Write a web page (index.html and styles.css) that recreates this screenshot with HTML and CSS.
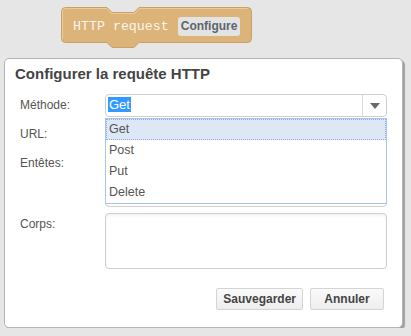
FILE: index.html
```html
<!DOCTYPE html>
<html lang="fr">
<head>
    <meta charset="UTF-8">
    <title>Configurer la requête HTTP</title>
    <link rel="stylesheet" href="styles.css">
</head>
<body>
    <div class="workspace">
        <div class="block">
            <svg class="block-shape" width="194" height="44" viewBox="0 0 194 44">
                <path d="M1.5,5.5 Q1.5,1.5 5.5,1.5 H47 L52,6.5 H74 L79,1.5 H187.5 Q191.5,1.5 191.5,5.5 V32.5 Q191.5,36.5 187.5,36.5 H79 L74,41.5 H52 L47,36.5 H5.5 Q1.5,36.5 1.5,32.5 Z"
                      fill="#dcb47a" stroke="#c8a068" stroke-width="1"/>
                <path d="M2.5,33 V5.5 Q2.5,2.5 5.5,2.5 H46.5 L51.5,7.5 H74.5 L79.5,2.5 H187.5" fill="none" stroke="#e8cc9c" stroke-width="1"/>
            </svg>
            <div class="block-content">
                <span class="block-label">HTTP request</span>
                <span class="block-button">Configure</span>
            </div>
        </div>
    </div>

    <div class="dialog">
        <h2 class="dialog-title">Configurer la requête HTTP</h2>
        <div class="form">
            <label class="form-label">Méthode:</label>
            <div class="select-wrap">
                <div class="select">
                    <span class="select-value"><span class="selected-text">Get</span></span>
                    <span class="select-arrow"></span>
                </div>
                <ul class="select-list">
                    <li class="option option-active">Get</li>
                    <li class="option">Post</li>
                    <li class="option">Put</li>
                    <li class="option">Delete</li>
                </ul>
            </div>

            <label class="form-label">URL:</label>
            <div class="input"></div>

            <label class="form-label">Entêtes:</label>
            <div class="textarea textarea-headers"></div>

            <label class="form-label">Corps:</label>
            <div class="textarea"></div>
        </div>
        <div class="actions">
            <button class="btn btn-save">Sauvegarder</button>
            <button class="btn btn-cancel">Annuler</button>
        </div>
    </div>
</body>
</html>
```

FILE: styles.css
```css
body {
    margin: 0;
    background-color: #e6e6e6;
    font-family: "Liberation Sans", Arial, sans-serif;
}

.workspace {
    height: 58px;
    padding: 6px 0 0 60px;
    box-sizing: border-box;
}

.block {
    position: relative;
    width: 194px;
    height: 44px;
}

.block-shape {
    position: absolute;
    left: 0;
    top: 0;
}

.block-content {
    position: relative;
    display: flex;
    align-items: center;
    gap: 9px;
    padding: 11px 0 0 13px;
}

.block-label {
    font-family: "Liberation Mono", monospace;
    font-size: 13.3px;
    color: #fbf5ea;
}

.block-button {
    font-weight: bold;
    font-size: 12px;
    color: #5b6670;
    background-color: #e3e3e1;
    border-radius: 3px;
    padding: 3px 3px 3px 3px;
    line-height: 13px;
}

.dialog {
    margin-left: 4px;
    width: 399px;
    height: 270px;
    box-sizing: border-box;
    background: white;
    border: 1px solid #b4b4b4;
    border-radius: 5px;
    box-shadow: 2px 2px 1px rgba(0,0,0,0.3);
}

.dialog-title {
    margin: 0;
    padding: 6px 0 0 10px;
    height: 29px;
    box-sizing: border-box;
    font-size: 15px;
    line-height: 18px;
    color: #444;
}

.form {
    display: grid;
    grid-template-columns: 85px 282px;
    row-gap: 6px;
    padding: 6px 15px 0 15px;
}

.form-label {
    font-size: 12px;
    color: #555;
    padding-top: 4px;
}

.select-wrap {
    position: relative;
}

.select {
    display: flex;
    height: 23px;
    box-sizing: border-box;
    border: 1px solid #cfcfcf;
    border-radius: 4px;
    background: white;
}

.select-value {
    flex: 1;
    padding: 2px 0 0 2px;
    font-size: 13px;
    color: #555;
}

.selected-text {
    background-color: #3399ff;
    color: white;
    padding: 0 1px;
}

.select-arrow {
    width: 23px;
    border-left: 1px solid #dcdcdc;
    position: relative;
}

.select-arrow::after {
    content: "";
    position: absolute;
    left: 7px;
    top: 8px;
    border-left: 5px solid transparent;
    border-right: 5px solid transparent;
    border-top: 6px solid #6a6a6a;
}

.select-list {
    position: absolute;
    top: 24px;
    left: 0;
    width: 282px;
    box-sizing: border-box;
    margin: 0;
    padding: 0;
    list-style: none;
    background: white;
    border: 1px solid #a9c5ee;
    z-index: 2;
}

.option {
    height: 21px;
    line-height: 21px;
    padding-left: 3px;
    font-size: 12.5px;
    color: #555;
}

.option-active {
    background-color: #dde7f6;
    outline: 1px dotted #8eaee0;
    outline-offset: -1px;
}

.input {
    height: 23px;
    box-sizing: border-box;
    border: 1px solid #cfcfcf;
    border-radius: 4px;
}

.textarea {
    height: 56px;
    box-sizing: border-box;
    border: 1px solid #cfcfcf;
    border-radius: 4px;
    box-shadow: inset 0 2px 3px rgba(0,0,0,0.05);
}

.textarea-headers {
    height: 55px;
}

.actions {
    display: flex;
    justify-content: flex-end;
    gap: 7px;
    padding: 19px 18px 0 0;
}

.btn {
    height: 22px;
    box-sizing: border-box;
    border: 1px solid #d4d4d4;
    border-radius: 2px;
    background: linear-gradient(#fafafa, #eeeeee);
    font-family: "Liberation Sans", Arial, sans-serif;
    font-weight: bold;
    font-size: 12px;
    color: #444;
    padding: 0 6px;
}

.btn-cancel {
    width: 74px;
}
```
